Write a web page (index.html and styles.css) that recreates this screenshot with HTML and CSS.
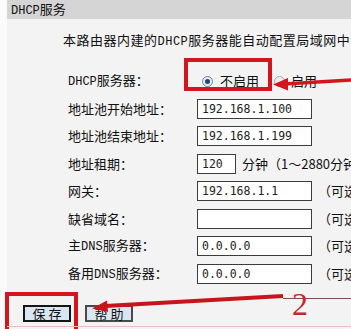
FILE: index.html
```html
<!DOCTYPE html>
<html lang="zh-CN">
<head>
<meta charset="utf-8">
<title>DHCP服务</title>
<link rel="stylesheet" href="styles.css">
</head>
<body>
<div class="page">
  <div class="frame">
    <div class="title"><span class="lat">DHCP</span>服务</div>
    <div class="panel">
      <p class="intro">本路由器内建的<span class="lat">DHCP</span>服务器能自动配置局域网中计算机的<span class="lat">TCP/IP</span>协议。</p>
      <div class="form">
        <div class="row">
          <span class="label"><span class="lat">DHCP</span>服务器：</span>
          <span class="field"><span class="radio on"></span><span class="opt">不启用</span><span class="radio off"></span><span class="opt opt2">启用</span></span>
        </div>
        <div class="row">
          <span class="label">地址池开始地址：</span>
          <span class="field"><span class="input">192.168.1.100</span></span>
        </div>
        <div class="row">
          <span class="label">地址池结束地址：</span>
          <span class="field"><span class="input">192.168.1.199</span></span>
        </div>
        <div class="row">
          <span class="label">地址租期：</span>
          <span class="field"><span class="input short">120</span><span class="unit">分钟（1～2880分钟，缺省为120分钟）</span></span>
        </div>
        <div class="row">
          <span class="label">网关：</span>
          <span class="field"><span class="input">192.168.1.1</span><span class="note">（可选）</span></span>
        </div>
        <div class="row">
          <span class="label">缺省域名：</span>
          <span class="field"><span class="input"></span><span class="note">（可选）</span></span>
        </div>
        <div class="row">
          <span class="label">主<span class="lat">DNS</span>服务器：</span>
          <span class="field"><span class="input">0.0.0.0</span><span class="note">（可选）</span></span>
        </div>
        <div class="row">
          <span class="label">备用<span class="lat">DNS</span>服务器：</span>
          <span class="field"><span class="input">0.0.0.0</span><span class="note">（可选）</span></span>
        </div>
      </div>
      <div class="buttons">
        <span class="btn save">保&nbsp;存</span>
        <span class="btn help">帮&nbsp;助</span>
      </div>
    </div>
  </div>
  <svg class="marks" width="351" height="329" viewBox="0 0 351 329">
    <rect x="186" y="60" width="84" height="29" fill="none" stroke="#d3161e" stroke-width="4"/>
    <line x1="284" y1="84" x2="352" y2="80" stroke="#d3161e" stroke-width="3.5"/>
    <polygon points="273,84.5 288,78 288,90.5" fill="#d3161e"/>
    <rect x="7" y="294" width="69" height="40" fill="none" stroke="#d3161e" stroke-width="4"/>
    <line x1="105" y1="306" x2="283" y2="296" stroke="#c9141c" stroke-width="4"/>
    <polygon points="92,308.5 107,300.5 108,312" fill="#c9141c"/>
    <line x1="283" y1="298.5" x2="351" y2="298.5" stroke="#7d5050" stroke-width="1"/>
    <text x="292" y="315" class="num">2</text>
    <line x1="7" y1="326.5" x2="351" y2="326.5" stroke="#ebbcbc" stroke-width="1"/>
  </svg>
</div>
</body>
</html>
```
FILE: styles.css
```css
html, body {
  margin: 0;
  padding: 0;
}
body {
  font-family: "Noto Sans CJK SC", sans-serif;
  color: #111;
  background: #fbfbfb;
}
.page {
  position: relative;
  width: 351px;
  height: 329px;
  overflow: hidden;
  background: #fbfbfb;
}
.frame {
  margin-left: 7px;
  height: 329px;
  display: flex;
  flex-direction: column;
}
.lat {
  font-family: "Liberation Mono", monospace;
  font-size: 12px;
}
.title {
  flex: none;
  height: 19px;
  background: #d5d5d5;
  padding-left: 4px;
  font-size: 13px;
  line-height: 17px;
  white-space: nowrap;
}
.panel {
  flex: 1;
  background: #f3f3f3;
  padding-top: 13px;
}
.intro {
  margin: 0 0 0 56px;
  font-size: 13px;
  line-height: 16px;
  letter-spacing: 0.5px;
  white-space: nowrap;
  overflow: hidden;
}
.form {
  margin-top: 17.25px;
  padding-left: 61px;
}
.row {
  height: 27.5px;
  display: flex;
  align-items: center;
}
.label {
  flex: none;
  width: 129px;
  font-size: 13px;
  line-height: 16px;
  white-space: nowrap;
}
.field {
  display: flex;
  align-items: center;
  white-space: nowrap;
  font-size: 13px;
  line-height: 16px;
}
.radio {
  flex: none;
  width: 11px;
  height: 11px;
  box-sizing: border-box;
  border-radius: 50%;
  position: relative;
}
.radio.on {
  margin-left: 5px;
  border: 1px solid #6f7f90;
  background: #e6ecf2;
}
.radio.on::after {
  content: "";
  position: absolute;
  left: 2px;
  top: 2px;
  width: 5px;
  height: 5px;
  border-radius: 50%;
  background: #23456e;
}
.radio.off {
  margin-left: 15px;
  border: 1px solid #a9a9a9;
  background: #eeeeee;
}
.opt {
  margin-left: 7px;
}
.opt.opt2 {
  margin-left: 6px;
}
.input {
  flex: none;
  width: 115px;
  height: 20px;
  box-sizing: border-box;
  border: 1px solid #3c3c3c;
  background: #fff;
  padding-left: 4px;
  font-family: "DejaVu Sans Mono", monospace;
  font-size: 11.5px;
  line-height: 18px;
  color: #222;
}
.input.short {
  width: 39px;
}
.unit {
  margin-left: 6px;
}
.note {
  margin-left: 6px;
}
.buttons {
  margin-top: 17.75px;
  padding-left: 16px;
  display: flex;
  gap: 14px;
}
.btn {
  width: 48px;
  height: 17px;
  box-sizing: border-box;
  background: #d9e5f1;
  font-size: 13px;
  line-height: 13px;
  text-align: center;
  white-space: nowrap;
}
.btn.save {
  border: 2px solid #151515;
}
.btn.help {
  border: 2px solid #4a4a4a;
}
.marks {
  position: absolute;
  left: 0;
  top: 0;
}
.num {
  font-family: "Liberation Serif", serif;
  font-size: 32px;
  fill: #c4262e;
}
```
